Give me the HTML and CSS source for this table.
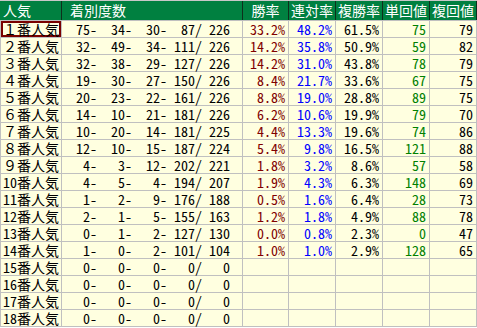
FILE: index.html
```html
<!DOCTYPE html>
<html lang="ja">
<head>
<meta charset="utf-8">
<link rel="stylesheet" href="styles.css">
</head>
<body>
<div class="sheet">
  <div class="head">
    <div class="h left">人気</div>
    <div class="h left2">着別度数</div>
    <div class="h">勝率</div>
    <div class="h">連対率</div>
    <div class="h">複勝率</div>
    <div class="h">単回値</div>
    <div class="h">複回値</div>
  </div>
  <div class="body">
    <div class="c lab sel">１番人気</div><div class="c cnt"><span>75-</span><span>34-</span><span>30-</span><span>87/</span><span>226</span></div><div class="c n red">33.2%</div><div class="c n blue">48.2%</div><div class="c n">61.5%</div><div class="c n green">75</div><div class="c n">79</div>
    <div class="c lab">２番人気</div><div class="c cnt"><span>32-</span><span>49-</span><span>34-</span><span>111/</span><span>226</span></div><div class="c n red">14.2%</div><div class="c n blue">35.8%</div><div class="c n">50.9%</div><div class="c n green">59</div><div class="c n">82</div>
    <div class="c lab">３番人気</div><div class="c cnt"><span>32-</span><span>38-</span><span>29-</span><span>127/</span><span>226</span></div><div class="c n red">14.2%</div><div class="c n blue">31.0%</div><div class="c n">43.8%</div><div class="c n green">78</div><div class="c n">79</div>
    <div class="c lab">４番人気</div><div class="c cnt"><span>19-</span><span>30-</span><span>27-</span><span>150/</span><span>226</span></div><div class="c n red">8.4%</div><div class="c n blue">21.7%</div><div class="c n">33.6%</div><div class="c n green">67</div><div class="c n">75</div>
    <div class="c lab">５番人気</div><div class="c cnt"><span>20-</span><span>23-</span><span>22-</span><span>161/</span><span>226</span></div><div class="c n red">8.8%</div><div class="c n blue">19.0%</div><div class="c n">28.8%</div><div class="c n green">89</div><div class="c n">75</div>
    <div class="c lab">６番人気</div><div class="c cnt"><span>14-</span><span>10-</span><span>21-</span><span>181/</span><span>226</span></div><div class="c n red">6.2%</div><div class="c n blue">10.6%</div><div class="c n">19.9%</div><div class="c n green">79</div><div class="c n">70</div>
    <div class="c lab">７番人気</div><div class="c cnt"><span>10-</span><span>20-</span><span>14-</span><span>181/</span><span>225</span></div><div class="c n red">4.4%</div><div class="c n blue">13.3%</div><div class="c n">19.6%</div><div class="c n green">74</div><div class="c n">86</div>
    <div class="c lab">８番人気</div><div class="c cnt"><span>12-</span><span>10-</span><span>15-</span><span>187/</span><span>224</span></div><div class="c n red">5.4%</div><div class="c n blue">9.8%</div><div class="c n">16.5%</div><div class="c n green">121</div><div class="c n">88</div>
    <div class="c lab">９番人気</div><div class="c cnt"><span>4-</span><span>3-</span><span>12-</span><span>202/</span><span>221</span></div><div class="c n red">1.8%</div><div class="c n blue">3.2%</div><div class="c n">8.6%</div><div class="c n green">57</div><div class="c n">58</div>
    <div class="c lab">10番人気</div><div class="c cnt"><span>4-</span><span>5-</span><span>4-</span><span>194/</span><span>207</span></div><div class="c n red">1.9%</div><div class="c n blue">4.3%</div><div class="c n">6.3%</div><div class="c n green">148</div><div class="c n">69</div>
    <div class="c lab">11番人気</div><div class="c cnt"><span>1-</span><span>2-</span><span>9-</span><span>176/</span><span>188</span></div><div class="c n red">0.5%</div><div class="c n blue">1.6%</div><div class="c n">6.4%</div><div class="c n green">28</div><div class="c n">73</div>
    <div class="c lab">12番人気</div><div class="c cnt"><span>2-</span><span>1-</span><span>5-</span><span>155/</span><span>163</span></div><div class="c n red">1.2%</div><div class="c n blue">1.8%</div><div class="c n">4.9%</div><div class="c n green">88</div><div class="c n">78</div>
    <div class="c lab">13番人気</div><div class="c cnt"><span>0-</span><span>1-</span><span>2-</span><span>127/</span><span>130</span></div><div class="c n red">0.0%</div><div class="c n blue">0.8%</div><div class="c n">2.3%</div><div class="c n green">0</div><div class="c n">47</div>
    <div class="c lab">14番人気</div><div class="c cnt"><span>1-</span><span>0-</span><span>2-</span><span>101/</span><span>104</span></div><div class="c n red">1.0%</div><div class="c n blue">1.0%</div><div class="c n">2.9%</div><div class="c n green">128</div><div class="c n">65</div>
    <div class="c lab">15番人気</div><div class="c cnt"><span>0-</span><span>0-</span><span>0-</span><span>0/</span><span>0</span></div><div class="c n"></div><div class="c n"></div><div class="c n"></div><div class="c n"></div><div class="c n"></div>
    <div class="c lab">16番人気</div><div class="c cnt"><span>0-</span><span>0-</span><span>0-</span><span>0/</span><span>0</span></div><div class="c n"></div><div class="c n"></div><div class="c n"></div><div class="c n"></div><div class="c n"></div>
    <div class="c lab">17番人気</div><div class="c cnt"><span>0-</span><span>0-</span><span>0-</span><span>0/</span><span>0</span></div><div class="c n"></div><div class="c n"></div><div class="c n"></div><div class="c n"></div><div class="c n"></div>
    <div class="c lab">18番人気</div><div class="c cnt"><span>0-</span><span>0-</span><span>0-</span><span>0/</span><span>0</span></div><div class="c n"></div><div class="c n"></div><div class="c n"></div><div class="c n"></div><div class="c n"></div>
  </div>
</div>
</body>
</html>
```

FILE: styles.css
```css
html, body {
  margin: 0;
  padding: 0;
  background: #ffffff;
}
.sheet {
  width: 477px;
  font-family: "Noto Sans Mono CJK JP", "Noto Sans CJK JP", monospace;
  font-size: 14px;
}
.head {
  display: grid;
  grid-template-columns: 61px 180px 45px 46px 46px 46px 46px;
  column-gap: 1px;
  padding-right: 1px;
  background: #0e2f1c;
  border-top: 1px solid #c8c8c8;
  height: 19px;
}
.h {
  background: #008040;
  color: #ffffff;
  line-height: 19px;
  text-align: center;
  white-space: nowrap;
}
.h.left {
  text-align: left;
  padding-left: 3px;
}
.h.left2 {
  text-align: left;
  padding-left: 8px;
}
.body {
  display: grid;
  grid-template-columns: 60px 180px 45px 46px 46px 46px 46px;
  grid-auto-rows: 16px;
  gap: 1px;
  padding: 1px;
  background: #c0c0c0;
}
.c {
  background: #ffffe0;
  color: #000000;
  line-height: 16px;
  white-space: nowrap;
}
.lab {
  padding-left: 2px;
}
.sel {
  box-shadow: inset 0 0 0 2px #7a0000;
}
.cnt {
  display: flex;
}
.cnt span {
  display: block;
  width: 35px;
  text-align: right;
}
.cnt span:last-child {
  width: 28px;
}
.n {
  text-align: right;
  padding-right: 3px;
}
.red { color: #800000; }
.blue { color: #0000ff; }
.green { color: #008000; }
```
